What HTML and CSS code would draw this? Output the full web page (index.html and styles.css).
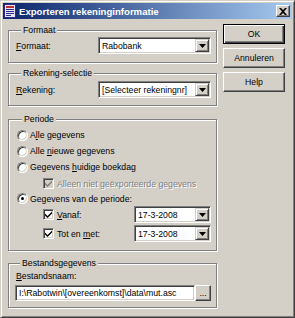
FILE: index.html
```html
<!DOCTYPE html>
<html lang="nl">
<head>
    <meta charset="UTF-8">
    <title>Exporteren rekeninginformatie</title>
    <link rel="stylesheet" href="styles.css">
</head>
<body>
    <div class="window">
        <div class="titlebar">
            <svg class="app-icon" width="12" height="14" viewBox="0 0 12 14">
                <rect x="0.5" y="0.5" width="11" height="13" fill="#e8e4f8" stroke="#2a2a8a"/>
                <rect x="2" y="2" width="8" height="2" fill="#c03030"/>
                <rect x="2" y="5" width="8" height="1" fill="#2a2a8a"/>
                <rect x="2" y="7" width="8" height="1" fill="#2a2a8a"/>
                <rect x="2" y="9" width="8" height="1" fill="#2a2a8a"/>
                <rect x="2" y="11" width="5" height="1" fill="#2a2a8a"/>
            </svg>
            <span class="title">Exporteren rekeninginformatie</span>
            <span class="close-btn">
                <svg width="8" height="7" viewBox="0 0 8 7">
                    <path d="M0 0h2l2 2 2-2h2L5 3.5 8 7H6L4 5 2 7H0l3-3.5z" fill="#000"/>
                </svg>
            </span>
        </div>

        <div class="client">
            <div class="panels">
                <div class="group g-formaat">
                    <div class="group-title">Formaat</div>
                    <div class="field-row">
                        <span class="field-label"><u>F</u>ormaat:</span>
                        <div class="combo combo-wide">
                            <span class="combo-text">Rabobank</span>
                            <span class="drop"><svg width="7" height="4"><path d="M0 0h7L3.5 4z"/></svg></span>
                        </div>
                    </div>
                </div>

                <div class="group g-rekening">
                    <div class="group-title">Rekening-selectie</div>
                    <div class="field-row">
                        <span class="field-label"><u>R</u>ekening:</span>
                        <div class="combo combo-wide">
                            <span class="combo-text">[Selecteer rekeningnr]</span>
                            <span class="drop"><svg width="7" height="4"><path d="M0 0h7L3.5 4z"/></svg></span>
                        </div>
                    </div>
                </div>

                <div class="group g-periode">
                    <div class="group-title">Periode</div>
                    <div class="opt r1"><span class="radio"></span><span>A<u>l</u>le gegevens</span></div>
                    <div class="opt"><span class="radio"></span><span>Alle <u>n</u>ieuwe gegevens</span></div>
                    <div class="opt"><span class="radio"></span><span>Gegevens <u>h</u>uidige boekdag</span></div>
                    <div class="opt sub disabled">
                        <span class="check">
                            <svg width="7" height="7" viewBox="0 0 7 7"><path d="M0 2.5l2.5 2.5L7 0.5v2L2.5 7 0 4.5z"/></svg>
                        </span>
                        <span>Alleen niet geëxporteerde gegevens</span>
                    </div>
                    <div class="opt r5"><span class="radio on"></span><span>Gegevens van de periode:</span></div>
                    <div class="opt sub date-row">
                        <span class="check">
                            <svg width="7" height="7" viewBox="0 0 7 7"><path d="M0 2.5l2.5 2.5L7 0.5v2L2.5 7 0 4.5z"/></svg>
                        </span>
                        <span><u>V</u>anaf:</span>
                        <div class="combo combo-date">
                            <span class="combo-text">17-3-2008</span>
                            <span class="drop"><svg width="7" height="4"><path d="M0 0h7L3.5 4z"/></svg></span>
                        </div>
                    </div>
                    <div class="opt sub date-row d2">
                        <span class="check">
                            <svg width="7" height="7" viewBox="0 0 7 7"><path d="M0 2.5l2.5 2.5L7 0.5v2L2.5 7 0 4.5z"/></svg>
                        </span>
                        <span>Tot en <u>m</u>et:</span>
                        <div class="combo combo-date">
                            <span class="combo-text">17-3-2008</span>
                            <span class="drop"><svg width="7" height="4"><path d="M0 0h7L3.5 4z"/></svg></span>
                        </div>
                    </div>
                </div>

                <div class="group g-bestand">
                    <div class="group-title">Bestandsgegevens</div>
                    <div class="file-label"><u>B</u>estandsnaam:</div>
                    <div class="file-row">
                        <div class="textbox">I:\Rabotwin\[overeenkomst]\data\mut.asc</div>
                        <span class="btn btn-small">...</span>
                    </div>
                </div>
            </div>

            <div class="actions">
                <span class="btn btn-default">OK</span>
                <span class="btn">Annuleren</span>
                <span class="btn">Help</span>
            </div>
        </div>
    </div>
</body>
</html>
```

FILE: styles.css
```css
* {
    box-sizing: border-box;
}

body {
    margin: 0;
    font-family: "Liberation Sans", Arial, sans-serif;
    font-size: 8.7px;
    color: #000;
    background-color: #d4d0c8;
}

u {
    text-decoration: underline;
    text-underline-offset: 1px;
}

.window {
    width: 295px;
    height: 318px;
    padding: 2px;
    background-color: #d4d0c8;
    border: 1px solid;
    border-color: #d4d0c8 #404040 #404040 #d4d0c8;
    box-shadow: inset 1px 1px #fff, inset -1px -1px #808080;
}

/* title bar */
.titlebar {
    height: 16px;
    display: flex;
    align-items: center;
    padding: 0 2px 0 1px;
    background: linear-gradient(to right, #0a246a, #a6caf0);
}

.app-icon {
    display: block;
    flex-shrink: 0;
}

.title {
    margin-left: 3px;
    color: #fff;
    font-weight: bold;
    font-size: 9.6px;
    white-space: nowrap;
}

.close-btn {
    margin-left: auto;
    width: 14px;
    height: 12px;
    display: flex;
    align-items: center;
    justify-content: center;
    background-color: #d4d0c8;
    border: 1px solid;
    border-color: #fff #404040 #404040 #fff;
    box-shadow: inset -1px -1px #808080;
}

.close-btn svg {
    display: block;
}

/* client area */
.client {
    display: flex;
}

.panels {
    width: 209px;
    margin-left: 5px;
}

.group {
    border: 1px solid #808080;
    box-shadow: inset 1px 1px #fff, 1px 1px #fff;
    padding: 0 5px 0 7px;
}

.group-title {
    height: 11px;
    line-height: 11px;
    margin: -6px 0 0 5px;
    padding: 0 2px;
    width: fit-content;
    background-color: #d4d0c8;
}

.g-formaat {
    margin-top: 11px;
    padding-bottom: 8px;
}

.g-formaat .field-row {
    margin-top: 1px;
}

.g-rekening {
    margin-top: 10px;
    padding-bottom: 7px;
}

.g-rekening .field-row {
    margin-top: 2px;
}

.field-row {
    display: flex;
    align-items: center;
    height: 17px;
}

.field-label {
    width: 82px;
}

/* combo boxes and text box */
.combo,
.textbox {
    height: 17px;
    padding: 1px;
    background-color: #fff;
    border: 1px solid;
    border-color: #808080 #fff #fff #808080;
    box-shadow: inset 1px 1px #404040, inset -1px -1px #d4d0c8;
}

.combo {
    display: flex;
    align-items: center;
}

.combo-wide {
    width: 113px;
}

.combo-date {
    width: 77px;
    margin-left: auto;
}

.combo-text {
    flex: 1;
    padding-left: 2px;
    white-space: nowrap;
    overflow: hidden;
}

.drop {
    width: 14px;
    height: 13px;
    display: flex;
    align-items: center;
    justify-content: center;
    background-color: #d4d0c8;
    border: 1px solid;
    border-color: #d4d0c8 #404040 #404040 #d4d0c8;
    box-shadow: inset 1px 1px #fff, inset -1px -1px #808080;
}

.drop svg {
    display: block;
}

/* periode options */
.g-periode {
    margin-top: 13px;
    padding: 0 5px 8px 8px;
}

.opt {
    display: flex;
    align-items: center;
    height: 16px;
    white-space: nowrap;
}

.opt.r1 {
    margin-top: 2px;
}

.opt.disabled {
    margin-top: 1px;
    height: 15px;
    color: #808080;
    text-shadow: 1px 1px #fff;
}

.opt.r5 {
    height: 15px;
}

.radio {
    position: relative;
    width: 11px;
    height: 11px;
    margin-right: 2px;
    flex-shrink: 0;
    border-radius: 50%;
    background-color: #fff;
    border: 1px solid;
    border-color: #808080 #fff #fff #808080;
    box-shadow: inset 1px 1px #404040, inset -1px -1px #d4d0c8;
}

.radio.on::after {
    content: "";
    position: absolute;
    left: 3px;
    top: 3px;
    width: 3px;
    height: 3px;
    border-radius: 50%;
    background-color: #000;
}

.sub {
    padding-left: 26px;
}

.check {
    width: 11px;
    height: 11px;
    margin-right: 3px;
    flex-shrink: 0;
    display: flex;
    align-items: center;
    justify-content: center;
    background-color: #fff;
    border: 1px solid;
    border-color: #808080 #fff #fff #808080;
    box-shadow: inset 1px 1px #404040, inset -1px -1px #d4d0c8;
}

.check svg {
    display: block;
    fill: #000;
}

.disabled .check {
    background-color: #d4d0c8;
}

.disabled .check svg {
    fill: #808080;
}

.date-row {
    height: 17px;
}

.date-row.d2 {
    margin-top: 2px;
}

/* bestand */
.g-bestand {
    margin-top: 12px;
    padding: 0 5px 6px 6px;
}

.file-label {
    height: 13px;
    line-height: 13px;
    margin-top: 1px;
    padding-left: 1px;
}

.file-row {
    display: flex;
    margin-top: 2px;
    height: 16px;
}

.textbox {
    width: 180px;
    height: 16px;
    line-height: 12px;
    padding-left: 3px;
    white-space: nowrap;
    overflow: hidden;
}

/* push buttons */
.actions {
    display: flex;
    flex-direction: column;
    margin: 5px 0 0 6px;
}

.btn {
    width: 62px;
    height: 20px;
    margin-bottom: 4px;
    display: flex;
    align-items: center;
    justify-content: center;
    background-color: #d4d0c8;
    border: 1px solid;
    border-color: #fff #404040 #404040 #fff;
    box-shadow: inset -1px -1px #808080;
}

.btn-default {
    border-color: #000;
    box-shadow: inset 1px 1px #fff, inset -1px -1px #404040, inset -2px -2px #808080;
}

.btn-small {
    width: 16px;
    height: 16px;
    margin: 0;
    align-items: flex-end;
    padding-bottom: 3px;
    line-height: 8px;
}
```
